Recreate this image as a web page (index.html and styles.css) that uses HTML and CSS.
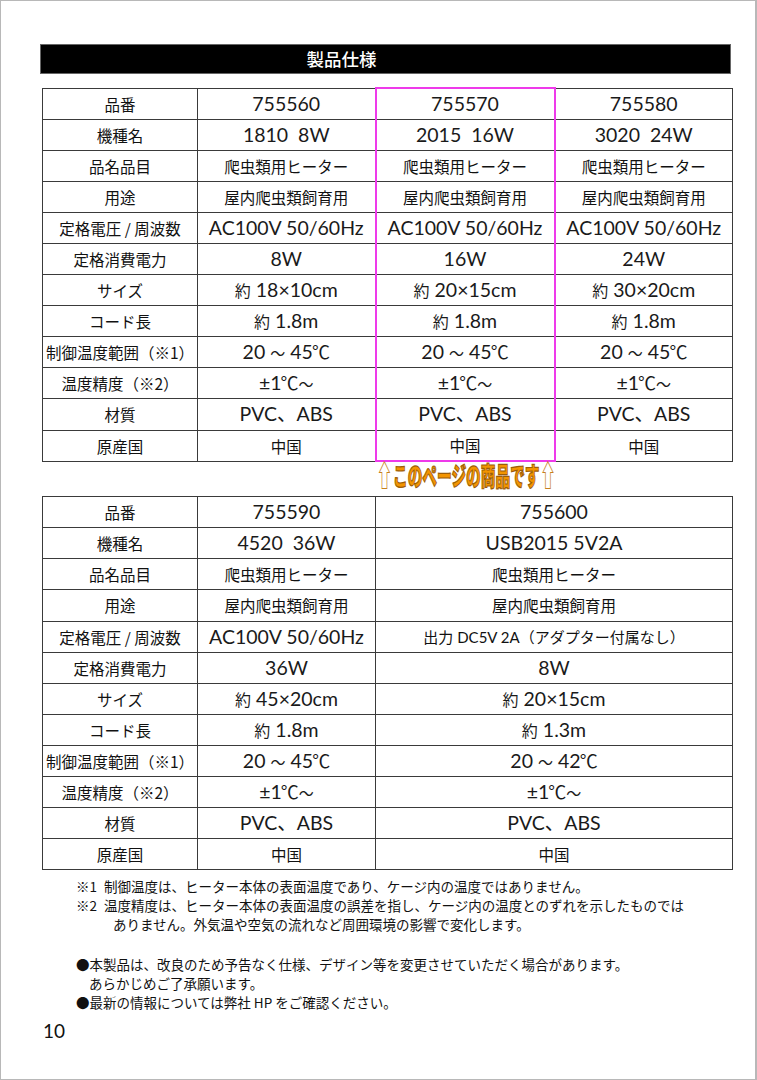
FILE: index.html
```html
<!DOCTYPE html>
<html lang="ja">
<head>
<meta charset="utf-8">
<title>製品仕様</title>
<link rel="stylesheet" href="styles.css">
</head>
<body>
<div class="page">
  <h1 class="title">製品仕様</h1>

  <table class="spec t1">
    <colgroup><col class="c0"><col class="c1"><col class="c2"><col class="c3"></colgroup>
    <tbody>
      <tr class="first"><td>品番</td><td class="n">755560</td><td class="n hl">755570</td><td class="n">755580</td></tr>
      <tr><td>機種名</td><td class="n">1810&nbsp;&nbsp;8W</td><td class="n hl">2015&nbsp;&nbsp;16W</td><td class="n">3020&nbsp;&nbsp;24W</td></tr>
      <tr><td>品名品目</td><td>爬虫類用ヒーター</td><td class="hl">爬虫類用ヒーター</td><td>爬虫類用ヒーター</td></tr>
      <tr><td>用途</td><td>屋内爬虫類飼育用</td><td class="hl">屋内爬虫類飼育用</td><td>屋内爬虫類飼育用</td></tr>
      <tr><td>定格電圧 / 周波数</td><td class="n">AC100V 50/60Hz</td><td class="n hl">AC100V 50/60Hz</td><td class="n">AC100V 50/60Hz</td></tr>
      <tr><td>定格消費電力</td><td class="n">8W</td><td class="n hl">16W</td><td class="n">24W</td></tr>
      <tr><td>サイズ</td><td class="n"><span class="j">約</span> 18×10cm</td><td class="n hl"><span class="j">約</span> 20×15cm</td><td class="n"><span class="j">約</span> 30×20cm</td></tr>
      <tr><td>コード長</td><td class="n"><span class="j">約</span> 1.8m</td><td class="n hl"><span class="j">約</span> 1.8m</td><td class="n"><span class="j">約</span> 1.8m</td></tr>
      <tr><td>制御温度範囲（※1）</td><td class="n">20 <span class="w">～</span> 45<span class="u">℃</span></td><td class="n hl">20 <span class="w">～</span> 45<span class="u">℃</span></td><td class="n">20 <span class="w">～</span> 45<span class="u">℃</span></td></tr>
      <tr><td>温度精度（※2）</td><td class="n">±1<span class="u">℃</span><span class="w">～</span></td><td class="n hl">±1<span class="u">℃</span><span class="w">～</span></td><td class="n">±1<span class="u">℃</span><span class="w">～</span></td></tr>
      <tr><td>材質</td><td class="n">PVC、ABS</td><td class="n hl">PVC、ABS</td><td class="n">PVC、ABS</td></tr>
      <tr class="last"><td>原産国</td><td>中国</td><td class="hl">中国</td><td>中国</td></tr>
    </tbody>
  </table>

  <div class="here-row">
    <div class="here"><span class="arrow">⇧</span><span class="here-text">このページの商品です</span><span class="arrow">⇧</span></div>
  </div>

  <table class="spec t2">
    <colgroup><col class="c0"><col class="c1"><col class="cw"></colgroup>
    <tbody>
      <tr><td>品番</td><td class="n">755590</td><td class="n">755600</td></tr>
      <tr><td>機種名</td><td class="n">4520&nbsp;&nbsp;36W</td><td class="n">USB2015 5V2A</td></tr>
      <tr><td>品名品目</td><td>爬虫類用ヒーター</td><td>爬虫類用ヒーター</td></tr>
      <tr><td>用途</td><td>屋内爬虫類飼育用</td><td>屋内爬虫類飼育用</td></tr>
      <tr><td>定格電圧 / 周波数</td><td class="n">AC100V 50/60Hz</td><td class="s">出力 DC5V 2A（アダプター付属なし）</td></tr>
      <tr><td>定格消費電力</td><td class="n">36W</td><td class="n">8W</td></tr>
      <tr><td>サイズ</td><td class="n"><span class="j">約</span> 45×20cm</td><td class="n"><span class="j">約</span> 20×15cm</td></tr>
      <tr><td>コード長</td><td class="n"><span class="j">約</span> 1.8m</td><td class="n"><span class="j">約</span> 1.3m</td></tr>
      <tr><td>制御温度範囲（※1）</td><td class="n">20 <span class="w">～</span> 45<span class="u">℃</span></td><td class="n">20 <span class="w">～</span> 42<span class="u">℃</span></td></tr>
      <tr><td>温度精度（※2）</td><td class="n">±1<span class="u">℃</span><span class="w">～</span></td><td class="n">±1<span class="u">℃</span><span class="w">～</span></td></tr>
      <tr><td>材質</td><td class="n">PVC、ABS</td><td class="n">PVC、ABS</td></tr>
      <tr><td>原産国</td><td>中国</td><td>中国</td></tr>
    </tbody>
  </table>

  <div class="notes">
    <div class="fn"><span class="mk">※1</span><span>制御温度は、ヒーター本体の表面温度であり、ケージ内の温度ではありません。</span></div>
    <div class="fn"><span class="mk">※2</span><span>温度精度は、ヒーター本体の表面温度の誤差を指し、ケージ内の温度とのずれを示したものでは</span></div>
    <div class="cont">ありません。外気温や空気の流れなど周囲環境の影響で変化します。</div>

    <div class="bullet gap">●本製品は、改良のため予告なく仕様、デザイン等を変更させていただく場合があります。</div>
    <div class="bcont">あらかじめご了承願います。</div>
    <div class="bullet">●最新の情報については弊社 HP をご確認ください。</div>
  </div>

  <div class="pno">10</div>
</div>
</body>
</html>
```

FILE: styles.css
```css
html, body {
  margin: 0;
  padding: 0;
  background: #fff;
}

.page {
  box-sizing: border-box;
  width: 757px;
  height: 1080px;
  border: 1px solid #b8b8b8;
  border-right-width: 2px;
  padding: 43px 0 0 39px;
  font-family: "Noto Sans CJK JP", sans-serif;
  color: #111;
}

.title {
  box-sizing: border-box;
  width: 691px;
  height: 30px;
  margin: 0;
  padding-right: 88px;
  background: #000;
  border: 1px solid #666;
  color: #fff;
  font-size: 17.5px;
  font-weight: 500;
  line-height: 28px;
  text-align: center;
}

.spec {
  border-collapse: collapse;
  margin-left: 2px;
  table-layout: fixed;
  width: 690px;
}

.t1 { margin-top: 13px; }

.c0 { width: 155px; }
.c1 { width: 178px; }
.c2 { width: 179px; }
.c3 { width: 178px; }
.cw { width: 357px; }

.spec tr { height: 31.1px; }

.spec td {
  border: 1px solid #3a3a3a;
  padding: 0;
  text-align: center;
  vertical-align: middle;
  font-family: "Noto Sans CJK JP", sans-serif;
  font-size: 15.5px;
  line-height: 20px;
  white-space: nowrap;
}

.spec td.n {
  font-family: Lato, "Noto Sans CJK JP", sans-serif;
  font-size: 19.5px;
  color: #1a1a1a;
}

.spec td.n .j {
  font-family: "Noto Sans CJK JP", sans-serif;
  font-size: 16px;
}

.spec td.n .u {
  font-family: "Noto Sans CJK JP", sans-serif;
  font-size: 18px;
  margin-left: -1px;
}

.spec td.n .w {
  font-family: "Noto Sans CJK JP", sans-serif;
  font-size: 15px;
}

.spec td.s {
  font-family: Lato, "Noto Sans CJK JP", sans-serif;
  font-size: 15px;
}

.spec td.hl {
  border-left: 2px solid #ee3aea;
  border-right: 2px solid #ee3aea;
}

.t1 tr.first td.hl { border-top: 2px solid #ee3aea; }
.t1 tr.last td.hl { border-bottom: 2px solid #ee3aea; }

.here-row {
  height: 34px;
  padding-left: 336px;
}

.here {
  display: inline-block;
  height: 34px;
  white-space: nowrap;
  transform: scaleX(0.565);
  transform-origin: left center;
  font-family: "Noto Sans CJK JP", sans-serif;
  font-size: 26px;
  line-height: 26px;
}

.here-text {
  font-weight: 900;
  color: #f39400;
  -webkit-text-stroke: 1.2px #9c5c08;
}

.arrow {
  color: #c7801c;
  font-weight: 400;
  font-size: 30px;
  line-height: 0;
}

.notes {
  margin-top: 7px;
  padding-left: 36px;
  font-size: 13.5px;
  line-height: 19px;
  color: #111;
}

.fn {
  display: flex;
}

.fn .mk {
  width: 28px;
  flex: none;
}

.cont {
  padding-left: 37px;
}

.gap { margin-top: 21px; }

.bcont { padding-left: 13px; }

.pno {
  margin-top: 7px;
  padding-left: 3px;
  font-family: Lato, sans-serif;
  font-size: 19px;
  line-height: 24px;
  color: #111;
}
```
